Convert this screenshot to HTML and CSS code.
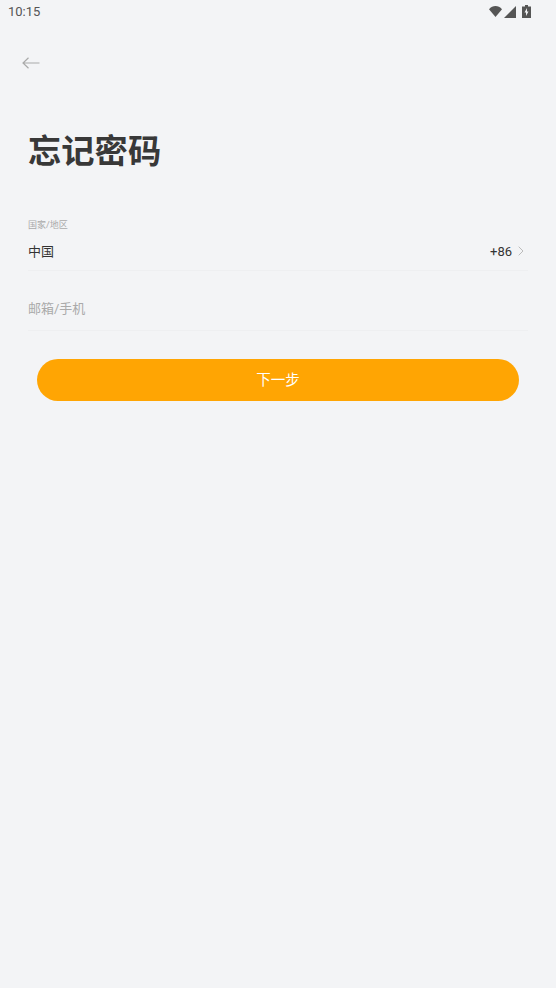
FILE: index.html
```html
<!DOCTYPE html>
<html lang="zh-CN">
<head>
    <meta charset="UTF-8">
    <meta name="viewport" content="width=device-width, initial-scale=1.0">
    <title>忘记密码</title>
    <link rel="stylesheet" href="styles.css">
</head>
<body>

    <div class="status-bar">
        <span class="time">10:15</span>
        <div class="status-icons">
            <svg class="icon-wifi" viewBox="0 0 14 11" width="13" height="11" preserveAspectRatio="none">
                <path d="M0 3.200C2 1.200 4.400 0 7 0s5 1.200 7 3.200L7 11z" fill="#555"/>
            </svg>
            <svg class="icon-signal" viewBox="0 0 12 12" width="12" height="12">
                <path d="M12 0v12H0z" fill="#555"/>
            </svg>
            <svg class="icon-battery" viewBox="0 0 9 13" width="9" height="13">
                <path d="M3 0h3v1.500h3V13H0V1.500h3z" fill="#555"/>
                <path d="M5 3L2.500 7.500H4V11l2.500-4.500H5z" fill="#f3f4f6"/>
            </svg>
        </div>
    </div>

    <div class="nav-bar">
        <svg class="back-icon" viewBox="0 0 18 12" width="18" height="12">
            <path d="M17.500 6H1M6.500 .7L1 6l5.500 5.300" fill="none" stroke="#aaa" stroke-width="1.200"/>
        </svg>
    </div>

    <h1 class="page-title">忘记密码</h1>

    <div class="form">
        <div class="field field-country">
            <div class="field-label">国家/地区</div>
            <div class="field-row">
                <span class="field-value">中国</span>
                <span class="dial-code">+86
                    <svg class="chevron" viewBox="0 0 6 10" width="6" height="10">
                        <path d="M.7 .7L5 5 .7 9.300" fill="none" stroke="#bbb" stroke-width="1"/>
                    </svg>
                </span>
            </div>
        </div>
        <div class="field field-account">
            <span class="placeholder">邮箱/手机</span>
        </div>
        <button class="next-button">下一步</button>
    </div>

</body>
</html>
```

FILE: styles.css
```css
body {
    font-family: Roboto, "Noto Sans CJK SC", sans-serif;
    margin: 0;
    height: 988px;
    overflow: hidden;
    background-color: #f3f4f6;
    color: #333;
}

.status-bar {
    display: flex;
    justify-content: space-between;
    align-items: center;
    height: 23px;
    padding: 0 25px 0 8px;
}

.time {
    font-size: 13px;
    color: #555;
}

.status-icons {
    display: flex;
    align-items: center;
    gap: 2px;
}

.icon-signal {
    margin-right: 4px;
}

.nav-bar {
    display: flex;
    align-items: center;
    height: 80px;
    padding-left: 22px;
}

.page-title {
    margin: 25px 0 0;
    padding-left: 28px;
    font-size: 33.300px;
    line-height: 48px;
    font-weight: 700;
    color: #383838;
}

.form {
    display: flex;
    flex-direction: column;
    padding: 0 28px;
    margin-top: 43px;
}

.field {
    border-bottom: 1px solid #eeeff1;
}

.field-country {
    height: 51px;
}

.field-label {
    font-size: 9px;
    line-height: 13px;
    color: #aaa;
}

.field-row {
    display: flex;
    justify-content: space-between;
    align-items: center;
    margin-top: 6px;
    padding-right: 4px;
    height: 24px;
    font-size: 13px;
    color: #333;
}

.dial-code {
    display: flex;
    align-items: center;
    gap: 6px;
    padding-top: 2px;
}

.field-account {
    display: flex;
    align-items: center;
    height: 45px;
    padding-top: 14px;
}

.placeholder {
    font-size: 13px;
    color: #aaa;
}

.next-button {
    width: 482px;
    height: 42px;
    margin: 28px 0 0 9px;
    padding: 0 0 3px;
    border: none;
    border-radius: 21px;
    background-color: #ffa503;
    color: #fff;
    font-family: inherit;
    font-size: 14.500px;
}
```
